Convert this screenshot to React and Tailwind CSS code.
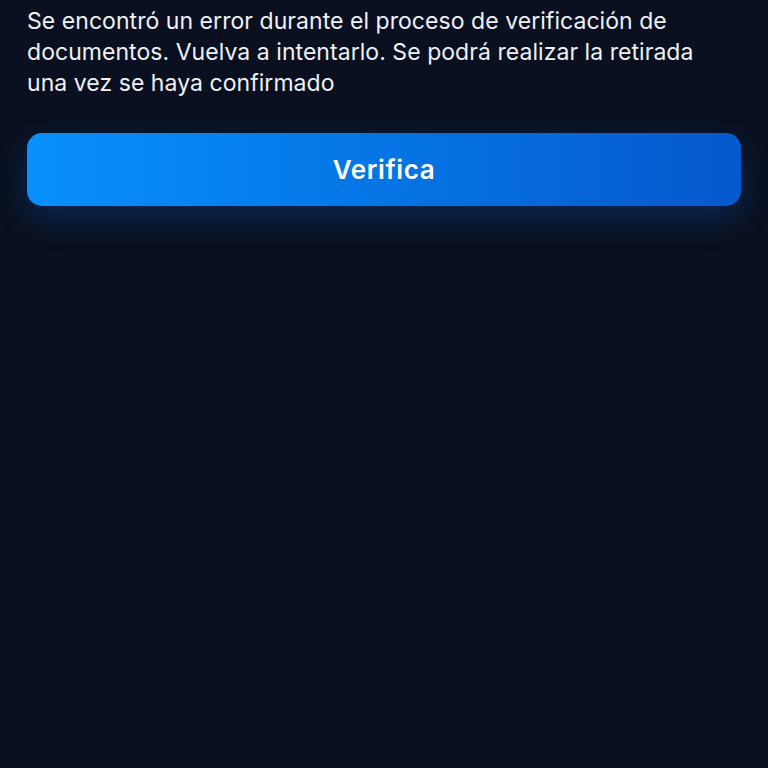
export default function App() {
  return (
    <div className="min-h-screen w-full bg-[#0a101f] font-['Inter','Noto_Sans',sans-serif] text-white">
      <div className="px-[27px] pt-[6px]">
        <p className="text-[23px] leading-[31px] tracking-[0.05px] text-[#eef1f6]">
          Se encontró un error durante el proceso de verificación de
          <br />
          documentos. Vuelva a intentarlo. Se podrá realizar la retirada
          <br />
          una vez se haya confirmado
        </p>
        <button className="mt-[34px] flex h-[73px] w-full items-center justify-center rounded-[15px] bg-gradient-to-r from-[#0991fd] to-[#0758cc] text-[26px] font-semibold tracking-[0.6px] text-white shadow-[0_12px_32px_rgba(12,96,220,0.28)]">
          Verifica
        </button>
      </div>
    </div>
  );
}
